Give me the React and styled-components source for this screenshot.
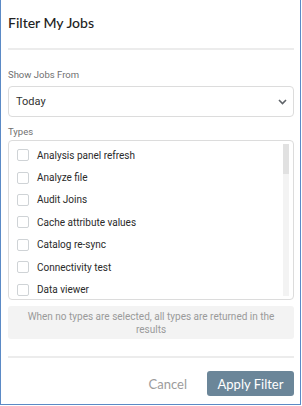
import React from 'react'
import styled, { createGlobalStyle } from 'styled-components'

const GlobalStyle = createGlobalStyle`
  html, body {
    margin: 0;
    padding: 0;
    background: #ffffff;
  }
  * {
    box-sizing: border-box;
  }
`

const Frame = styled.div`
  width: 301px;
  height: 405px;
  border: 1px solid #5b8ac6;
  border-top: 0;
  background: #fff;
  display: flex;
  flex-direction: column;
  padding: 0 6px 0 7px;
  font-family: Roboto, "Liberation Sans", sans-serif;
`

const Title = styled.h3`
  margin: 0;
  height: 48px;
  display: flex;
  align-items: center;
  padding-bottom: 4px;
  font-family: Lato, "Open Sans", sans-serif;
  font-weight: 500;
  font-size: 14px;
  color: #222;
`

const Divider = styled.div`
  height: 2px;
  background: #ececec;
`

const Label = styled.div`
  font-size: 9.5px;
  color: #707070;
  margin-top: ${p => p.$top}px;
  height: 12px;
  line-height: 12px;
`

const Select = styled.div`
  margin-top: 5px;
  height: 31px;
  border: 1px solid #dcdcdc;
  border-radius: 4px;
  display: flex;
  align-items: center;
  justify-content: space-between;
  padding: 0 6px 0 7px;
  font-size: 11px;
  color: #333;
`

const ListBox = styled.div`
  margin-top: 2px;
  height: 160px;
  border: 1px solid #dcdcdc;
  border-radius: 4px;
  padding: 3px 4px 3px 0;
  display: flex;
`

const Items = styled.div`
  flex: 1;
  display: flex;
  flex-direction: column;
  overflow: hidden;
`

const Track = styled.div`
  width: 6px;
  background: #f3f3f3;
  display: flex;
  flex-direction: column;
`

const Thumb = styled.div`
  height: 30px;
  background: #e1e1e1;
`

const Row = styled.label`
  height: 22.4px;
  flex-shrink: 0;
  display: flex;
  align-items: center;
  gap: 8px;
  padding-left: 8px;
  font-size: 10px;
  color: #2a2a2a;
`

const Box = styled.span`
  width: 12px;
  height: 12px;
  border: 1px solid #cfd3d6;
  border-radius: 2px;
  background: #fff;
  flex-shrink: 0;
`

const Note = styled.div`
  margin-top: 6px;
  height: 33px;
  background: #f3f3f3;
  border-radius: 3px;
  display: flex;
  align-items: center;
  justify-content: center;
  text-align: center;
  padding: 0 12px;
  font-size: 10px;
  line-height: 13px;
  color: #9a9a9a;
`

const Footer = styled.div`
  margin-top: 17px;
  border-top: 2px solid #ececec;
  padding-top: 13px;
  display: flex;
  justify-content: flex-end;
  align-items: center;
  gap: 20px;
`

const Button = styled.button`
  font-family: Lato, "Open Sans", sans-serif;
  font-size: 13px;
  height: 25px;
  border: 0;
  border-radius: 3px;
  padding: 0 ${p => (p.$primary ? 6 : 0)}px;
  width: ${p => (p.$primary ? '87px' : 'auto')};
  background: ${p => (p.$primary ? '#6b8699' : 'transparent')};
  color: ${p => (p.$primary ? '#fff' : '#9c9c9c')};
`

const types = [
  'Analysis panel refresh',
  'Analyze file',
  'Audit Joins',
  'Cache attribute values',
  'Catalog re-sync',
  'Connectivity test',
  'Data viewer'
]

const Chevron = () => (
  <svg width="9" height="6" viewBox="0 0 9 6">
    <path d="M1 1l3.5 3.5L8 1" fill="none" stroke="#5f6368" strokeWidth="1.6" />
  </svg>
)

const App = () => (
  <>
    <GlobalStyle />
    <Frame>
      <Title>Filter My Jobs</Title>
      <Divider />
      <Label $top={19}>Show Jobs From</Label>
      <Select>
        <span>Today</span>
        <Chevron />
      </Select>
      <Label $top={9}>Types</Label>
      <ListBox>
        <Items>
          {types.map(t => (
            <Row key={t}>
              <Box />
              {t}
            </Row>
          ))}
        </Items>
        <Track>
          <Thumb />
        </Track>
      </ListBox>
      <Note>When no types are selected, all types are returned in the results</Note>
      <Footer>
        <Button>Cancel</Button>
        <Button $primary>Apply Filter</Button>
      </Footer>
    </Frame>
  </>
)

export default App
